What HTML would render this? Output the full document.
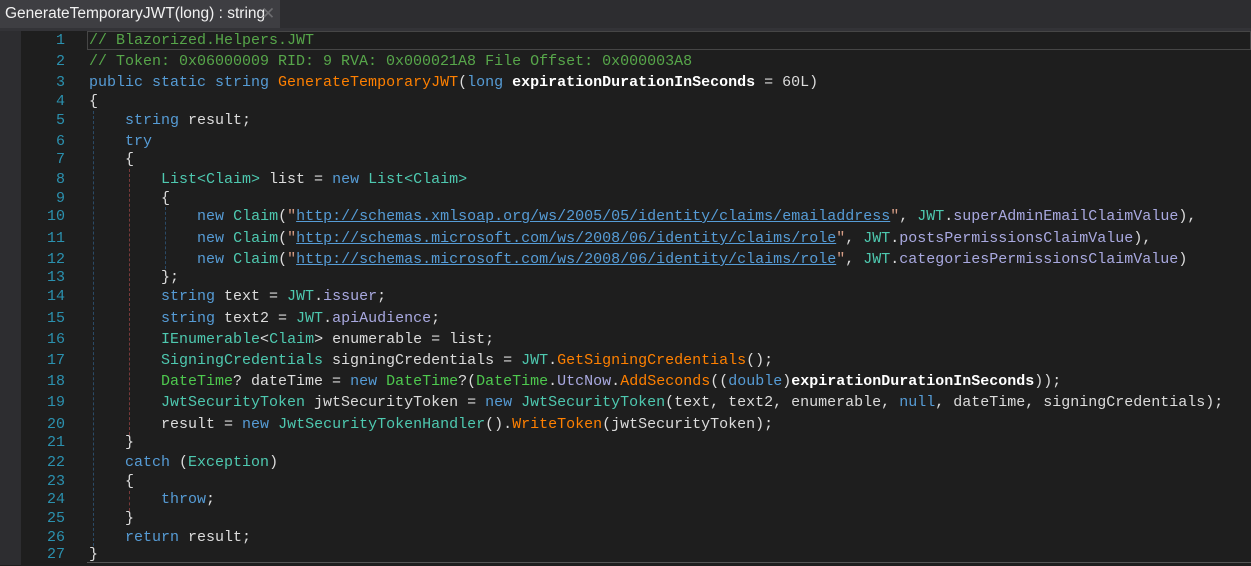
<!DOCTYPE html>
<html><head><meta charset="utf-8"><style>
html,body{margin:0;padding:0;}
body{width:1251px;height:565px;overflow:hidden;background:#1e1e1e;position:relative;font-family:"Liberation Mono",monospace;}
.bar{position:absolute;left:0;top:0;width:1251px;height:28px;background:#2d2d30;}
.strip{position:absolute;left:0;top:28px;width:1251px;height:3px;background:#333337;}
.tab{position:absolute;left:0;top:0;width:280px;height:28px;background:#3e3e42;color:#f1f1f1;font-family:"Liberation Sans",sans-serif;font-size:15.5px;line-height:28px;letter-spacing:0px;}
.tab span{position:absolute;left:5px;}
.tab b{position:absolute;left:261px;font-weight:normal;color:#6d6d70;font-size:17px;}
.side{position:absolute;left:0;top:31px;width:21px;height:534px;background:#2d2d30;}
.ln{position:absolute;right:1186px;width:40px;text-align:right;color:#2b91af;font-size:15px;line-height:18px;}
.l{position:absolute;left:89px;color:#dcdcdc;font-size:15px;line-height:18px;white-space:pre;}
.c{color:#57a64a}.k{color:#569cd6}.t{color:#4ec9b0}.m{color:#ff8000}.s{color:#d69d85}
.u{color:#569cd6;text-decoration:underline}.p{color:#a9a9e0}.b{font-weight:bold;color:#fff}
.cur{position:absolute;left:87px;top:31px;width:1164px;height:19px;border:1px solid #464646;box-sizing:border-box;}
.g{position:absolute;width:0;border-left:1px dashed #2b4a66;}
.r{position:absolute;width:0;border-left:1px dashed #7a3a3a;}
.w{position:absolute;left:0;top:1px;width:1251px;height:565px;}
</style></head><body>
<div class="bar"></div><div class="strip"></div>
<div class="tab"><span>GenerateTemporaryJWT(long) : string</span><b>✕</b></div>
<div class="side"></div>
<div class="cur"></div>
<div class="g" style="left:93px;top:111px;height:440px"></div>
<div class="r" style="left:129px;top:169px;height:266px"></div>
<div class="r" style="left:129px;top:491px;height:20px"></div>
<div class="g" style="left:165px;top:207px;height:62px"></div>
<div style="position:absolute;left:87px;top:562px;width:1164px;height:1px;background:#555"></div>
<div class="w">
<div class="ln" style="top:31px">1</div><div class="l" style="top:31px"><span class="c">// Blazorized.Helpers.JWT</span></div>
<div class="ln" style="top:52px">2</div><div class="l" style="top:52px"><span class="c">// Token: 0x06000009 RID: 9 RVA: 0x000021A8 File Offset: 0x000003A8</span></div>
<div class="ln" style="top:73px">3</div><div class="l" style="top:73px"><span class="k">public static string</span> <span class="m">GenerateTemporaryJWT</span>(<span class="k">long</span> <span class="b">expirationDurationInSeconds</span> = 60L)</div>
<div class="ln" style="top:92px">4</div><div class="l" style="top:92px">{</div>
<div class="ln" style="top:111px">5</div><div class="l" style="top:111px">    <span class="k">string</span> result;</div>
<div class="ln" style="top:132px">6</div><div class="l" style="top:132px">    <span class="k">try</span></div>
<div class="ln" style="top:150px">7</div><div class="l" style="top:150px">    {</div>
<div class="ln" style="top:170px">8</div><div class="l" style="top:170px">        <span class="t">List&lt;Claim&gt;</span> list = <span class="k">new</span> <span class="t">List&lt;Claim&gt;</span></div>
<div class="ln" style="top:189px">9</div><div class="l" style="top:189px">        {</div>
<div class="ln" style="top:207px">10</div><div class="l" style="top:207px">            <span class="k">new</span> <span class="t">Claim</span>(<span class="s">"</span><span class="u">http://schemas.xmlsoap.org/ws/2005/05/identity/claims/emailaddress</span><span class="s">"</span>, <span class="t">JWT</span>.<span class="p">superAdminEmailClaimValue</span>),</div>
<div class="ln" style="top:229px">11</div><div class="l" style="top:229px">            <span class="k">new</span> <span class="t">Claim</span>(<span class="s">"</span><span class="u">http://schemas.microsoft.com/ws/2008/06/identity/claims/role</span><span class="s">"</span>, <span class="t">JWT</span>.<span class="p">postsPermissionsClaimValue</span>),</div>
<div class="ln" style="top:250px">12</div><div class="l" style="top:250px">            <span class="k">new</span> <span class="t">Claim</span>(<span class="s">"</span><span class="u">http://schemas.microsoft.com/ws/2008/06/identity/claims/role</span><span class="s">"</span>, <span class="t">JWT</span>.<span class="p">categoriesPermissionsClaimValue</span>)</div>
<div class="ln" style="top:268px">13</div><div class="l" style="top:268px">        };</div>
<div class="ln" style="top:287px">14</div><div class="l" style="top:287px">        <span class="k">string</span> text = <span class="t">JWT</span>.<span class="p">issuer</span>;</div>
<div class="ln" style="top:309px">15</div><div class="l" style="top:309px">        <span class="k">string</span> text2 = <span class="t">JWT</span>.<span class="p">apiAudience</span>;</div>
<div class="ln" style="top:330px">16</div><div class="l" style="top:330px">        <span class="t">IEnumerable</span>&lt;<span class="t">Claim</span>&gt; enumerable = list;</div>
<div class="ln" style="top:351px">17</div><div class="l" style="top:351px">        <span class="t">SigningCredentials</span> signingCredentials = <span class="t">JWT</span>.<span class="m">GetSigningCredentials</span>();</div>
<div class="ln" style="top:372px">18</div><div class="l" style="top:372px">        <span class="c" style="color:#4ec94e">DateTime</span>? dateTime = <span class="k">new</span> <span class="c" style="color:#4ec94e">DateTime</span>?(<span class="c" style="color:#4ec94e">DateTime</span>.<span class="p">UtcNow</span>.<span class="m">AddSeconds</span>((<span class="k">double</span>)<span class="b">expirationDurationInSeconds</span>));</div>
<div class="ln" style="top:393px">19</div><div class="l" style="top:393px">        <span class="t">JwtSecurityToken</span> jwtSecurityToken = <span class="k">new</span> <span class="t">JwtSecurityToken</span>(text, text2, enumerable, <span class="k">null</span>, dateTime, signingCredentials);</div>
<div class="ln" style="top:415px">20</div><div class="l" style="top:415px">        result = <span class="k">new</span> <span class="t">JwtSecurityTokenHandler</span>().<span class="m">WriteToken</span>(jwtSecurityToken);</div>
<div class="ln" style="top:433px">21</div><div class="l" style="top:433px">    }</div>
<div class="ln" style="top:453px">22</div><div class="l" style="top:453px">    <span class="k">catch</span> (<span class="t">Exception</span>)</div>
<div class="ln" style="top:472px">23</div><div class="l" style="top:472px">    {</div>
<div class="ln" style="top:490px">24</div><div class="l" style="top:490px">        <span class="k">throw</span>;</div>
<div class="ln" style="top:509px">25</div><div class="l" style="top:509px">    }</div>
<div class="ln" style="top:528px">26</div><div class="l" style="top:528px">    <span class="k">return</span> result;</div>
<div class="ln" style="top:545px">27</div><div class="l" style="top:545px">}</div>
</div>
</body></html>
